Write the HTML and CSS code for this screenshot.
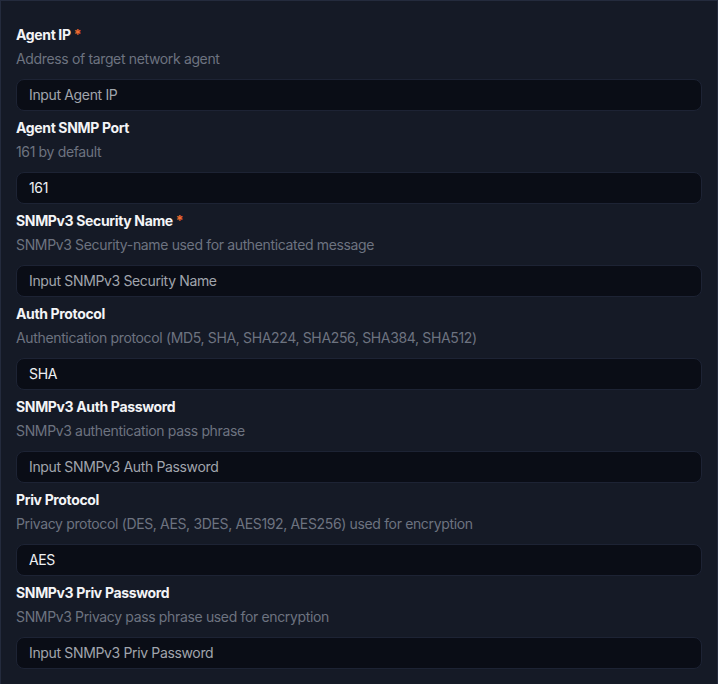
FILE: index.html
```html
<!DOCTYPE html>
<html>
<head>
<meta charset="utf-8">
<link rel="stylesheet" href="styles.css">
</head>
<body>
<div class="panel">
  <div class="field">
    <div class="label">Agent IP <span class="req">*</span></div>
    <div class="desc">Address of target network agent</div>
    <div class="input placeholder">Input Agent IP</div>
  </div>
  <div class="field">
    <div class="label">Agent SNMP Port</div>
    <div class="desc">161 by default</div>
    <div class="input">161</div>
  </div>
  <div class="field">
    <div class="label">SNMPv3 Security Name <span class="req">*</span></div>
    <div class="desc">SNMPv3 Security-name used for authenticated message</div>
    <div class="input placeholder">Input SNMPv3 Security Name</div>
  </div>
  <div class="field">
    <div class="label">Auth Protocol</div>
    <div class="desc">Authentication protocol (MD5, SHA, SHA224, SHA256, SHA384, SHA512)</div>
    <div class="input">SHA</div>
  </div>
  <div class="field">
    <div class="label">SNMPv3 Auth Password</div>
    <div class="desc">SNMPv3 authentication pass phrase</div>
    <div class="input placeholder">Input SNMPv3 Auth Password</div>
  </div>
  <div class="field">
    <div class="label">Priv Protocol</div>
    <div class="desc">Privacy protocol (DES, AES, 3DES, AES192, AES256) used for encryption</div>
    <div class="input">AES</div>
  </div>
  <div class="field">
    <div class="label">SNMPv3 Priv Password</div>
    <div class="desc">SNMPv3 Privacy pass phrase used for encryption</div>
    <div class="input placeholder">Input SNMPv3 Priv Password</div>
  </div>
</div>
</body>
</html>
```
FILE: styles.css
```css
* { box-sizing: border-box; }
html, body {
  margin: 0;
  padding: 0;
  background: #151a26;
  overflow: hidden;
}
body {
  font-family: Inter, "Liberation Sans", sans-serif;
  font-size: 14px;
  line-height: 20px;
  letter-spacing: -0.35px;
}
.panel {
  width: 718px;
  height: 684px;
  background: #151a26;
  border: 1px solid #242b3d;
  border-bottom: none;
  padding: 24px 15px 0 15px;
  display: flex;
  flex-direction: column;
  gap: 7px;
}
.field {
  display: flex;
  flex-direction: column;
}
.label {
  color: #f3f4f6;
  font-weight: 700;
  height: 20px;
}
.req {
  color: #f26b2f;
}
.desc {
  color: #6d7380;
  margin-top: 4px;
  height: 20px;
}
.input {
  margin-top: 10px;
  height: 32px;
  flex: none;
  background: #0a0d16;
  border: 1px solid #1d2334;
  border-radius: 8px;
  padding: 0 12px;
  display: flex;
  align-items: center;
  color: #eef0f3;
}
.input.placeholder {
  color: #a1a5ad;
}
```
